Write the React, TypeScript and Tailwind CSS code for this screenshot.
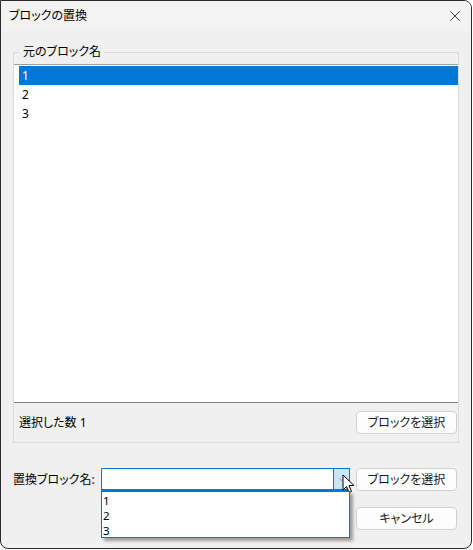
import { X, ChevronDown } from "lucide-react"

const font = "font-['Segoe_UI','Noto_Sans','Noto_Sans_CJK_JP',sans-serif] [font-feature-settings:'palt']"

function Btn({ label }: { label: string }) {
    return (
        <div className="w-[101px] h-[23px] rounded-[4px] border border-[#d0d0d0] bg-[#fdfdfd] flex items-center justify-center text-[12px] text-[#1a1a1a]">
            {label}
        </div>
    )
}

export default function App() {
    const items = ["1", "2", "3"]
    return (
        <div className={`w-[473px] h-[550px] bg-white ${font}`}>
            <div className="w-[472px] h-[549px] border border-[#2b2b2b] rounded-tr-lg rounded-b-lg overflow-hidden bg-[#f0f0f0] flex flex-col">
                {/* title bar */}
                <div className="h-[30px] bg-[#f3f3f3] flex items-center justify-between pl-[8px] pr-[7px] shrink-0">
                    <div className="text-[12px] text-black leading-none">ブロックの置換</div>
                    <X className="w-[18px] h-[18px] text-black" strokeWidth={1} />
                </div>

                <div className="pl-[12px] pr-[13px] pt-[13px] relative">
                    <fieldset className="border border-[#dcdcdc] w-[446px]">
                        <legend className="ml-[6px] px-[3px] text-[12px] leading-[16px] text-black">元のブロック名</legend>
                        <div className="mt-[4px] h-[339px] bg-white border-t border-[#a0a0a0] border-b border-b-[#828282] pt-[1px] pl-[5px]">
                            {items.map((it, i) => (
                                <div
                                    key={it}
                                    className={`h-[19px] pl-[3px] flex items-center text-[12px] ${i === 0 ? "bg-[#0078d7] text-white" : "text-black"}`}
                                >
                                    {it}
                                </div>
                            ))}
                        </div>
                        <div className="h-[39px] flex items-center justify-between pl-[5px] pr-[1px]">
                            <div className="text-[12px] text-black">選択した数 1</div>
                            <Btn label="ブロックを選択" />
                        </div>
                    </fieldset>

                    <div className="mt-[25px] flex items-center">
                        <div className="w-[88px] text-[12px] text-black">置換ブロック名:</div>
                        <div className="relative w-[249px] h-[23px] border border-[#0078d7] border-b-2 bg-white flex justify-end">
                            <div className="w-[16px] h-full bg-[#cce4f7] border-l border-[#0078d7] flex items-center justify-center">
                                <ChevronDown className="w-[9px] h-[9px] text-[#707070]" strokeWidth={1.5} />
                            </div>
                            {/* cursor */}
                            <svg className="absolute left-[240px] top-[5px]" width="14" height="20" viewBox="0 0 14 20">
                                <path d="M1 1 L1 16 L4.5 12.5 L7 18.5 L9.5 17.5 L7 11.5 L12 11.5 Z" fill="white" stroke="black" strokeWidth="1" strokeLinejoin="round" />
                            </svg>
                            {/* dropdown list */}
                            <div className="absolute left-[-1px] top-[22px] w-[249px] h-[47px] bg-white border border-[#0078d7] shadow-[3px_3px_3px_rgba(0,0,0,0.35)] pl-[1px] pt-[1px]">
                                {items.map((it) => (
                                    <div key={it} className="h-[15px] text-[11.5px] leading-[15px] text-black">
                                        {it}
                                    </div>
                                ))}
                            </div>
                        </div>
                        <div className="ml-[6px]">
                            <Btn label="ブロックを選択" />
                        </div>
                    </div>
                    <div className="mt-[16px] flex justify-end pr-[1px]">
                        <Btn label="キャンセル" />
                    </div>
                </div>
            </div>
        </div>
    )
}
